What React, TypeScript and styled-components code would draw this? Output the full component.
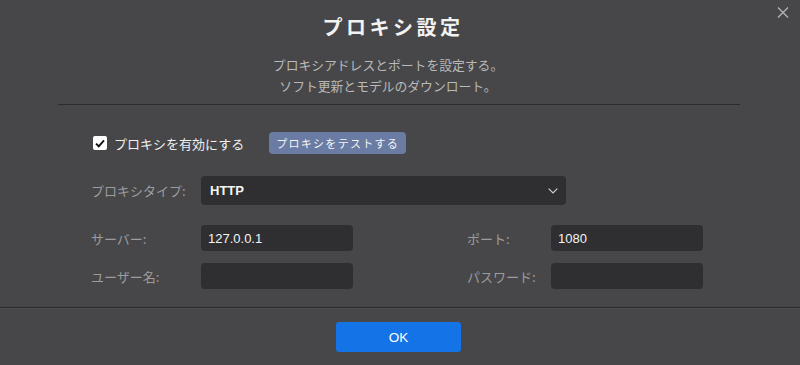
import React, { useState } from 'react'
import styled, { createGlobalStyle } from 'styled-components'

const GlobalStyle = createGlobalStyle`
  html, body {
    margin: 0;
    padding: 0;
    background: #474749;
  }
  * { box-sizing: border-box; }
`

const FONT = `"Noto Sans CJK JP", "Liberation Sans", Arial, sans-serif`

const Dialog = styled.div`
  position: relative;
  width: 800px;
  height: 365px;
  background: #474749;
  font-family: ${FONT};
  display: flex;
  flex-direction: column;
  overflow: hidden;
`

const CloseBtn = styled.button`
  position: absolute;
  top: 6px;
  right: 10px;
  width: 14px;
  height: 13px;
  padding: 0;
  border: none;
  background: transparent;
  cursor: pointer;
  display: flex;
  align-items: center;
  justify-content: center;
`

const Header = styled.div`
  padding-top: 14px;
  display: flex;
  flex-direction: column;
  align-items: center;
`

const Title = styled.h1`
  margin: 0 14px 0 0;
  font-size: 20px;
  line-height: 26px;
  font-weight: 700;
  letter-spacing: 3.5px;
  color: #f2f2f2;
`

const Subtitle = styled.p`
  margin: 14px 24px 0 0;
  font-size: 12.8px;
  line-height: 21px;
  color: #b9b9b9;
  text-align: center;
`

const Divider = styled.hr`
  align-self: stretch;
  margin: 8px 60px 0 58px;
  border: none;
  border-top: 1px solid #2c2c2e;
  height: 0;
`

const Body = styled.div`
  flex: 1;
  padding: 27px 0 0 91px;
  display: flex;
  flex-direction: column;
`

const CheckRow = styled.div`
  display: flex;
  align-items: center;
  height: 22px;
  gap: 25px;
`

const CheckLabel = styled.label`
  display: flex;
  align-items: center;
  gap: 7px;
  padding-left: 2px;
  font-size: 13px;
  color: #f0f0f0;
  cursor: pointer;
`

const CheckBox = styled.span`
  width: 14px;
  height: 14px;
  border-radius: 2px;
  background: #ffffff;
  display: flex;
  align-items: center;
  justify-content: center;
`

const TestButton = styled.button`
  height: 22px;
  padding: 0 7px;
  border: none;
  border-radius: 4px;
  background: #6a7ca3;
  color: #f4f4f4;
  font-family: ${FONT};
  font-size: 11px;
  letter-spacing: 1.3px;
  cursor: pointer;
`

const TypeRow = styled.div`
  margin-top: 22px;
  display: flex;
  align-items: center;
`

const Label = styled.span<{ $w: number }>`
  width: ${p => p.$w}px;
  flex-shrink: 0;
  font-size: 13px;
  color: #9c9c9c;
`

const Select = styled.div`
  width: 365px;
  height: 29px;
  border-radius: 4px;
  background: #2f2f31;
  display: flex;
  align-items: center;
  justify-content: space-between;
  padding: 0 8px 0 9px;
  font-family: "Liberation Sans", Arial, sans-serif;
  font-size: 13px;
  font-weight: 700;
  color: #f4f4f4;
`

const Grid = styled.div`
  margin-top: 20px;
  display: grid;
  grid-template-columns: 110px 152px 114px 84px 152px;
  row-gap: 12px;
  align-items: center;
`

const Input = styled.input`
  width: 152px;
  height: 26px;
  border: none;
  border-radius: 4px;
  background: #2f2f31;
  padding: 0 7px;
  font-family: "Liberation Sans", Arial, sans-serif;
  font-size: 13px;
  color: #f4f4f4;
  outline: none;
`

const Footer = styled.div`
  border-top: 1px solid #2a2a2c;
  box-shadow: inset 0 1px 0 #4f4f51;
  height: 58px;
  display: flex;
  justify-content: center;
  padding: 14px 3px 0 0;
`

const OkButton = styled.button`
  width: 125px;
  height: 30px;
  border: none;
  border-radius: 3px;
  background: #1473e6;
  color: #ffffff;
  font-family: "Liberation Sans", Arial, sans-serif;
  font-size: 13.5px;
  cursor: pointer;
`

const App: React.FC = () => {
  const [enabled, setEnabled] = useState(true)
  const [server, setServer] = useState('127.0.0.1')
  const [port, setPort] = useState('1080')
  const [user, setUser] = useState('')
  const [pass, setPass] = useState('')

  return (
    <>
      <GlobalStyle />
      <Dialog>
        <CloseBtn aria-label="close">
          <svg width="12" height="11" viewBox="0 0 12 11">
            <path d="M1 0.5 L11 10.5 M11 0.5 L1 10.5" stroke="#b4b4b4" strokeWidth="1.3" />
          </svg>
        </CloseBtn>
        <Header>
          <Title>プロキシ設定</Title>
          <Subtitle>
            プロキシアドレスとポートを設定する。
            <br />
            ソフト更新とモデルのダウンロート。
          </Subtitle>
          <Divider />
        </Header>
        <Body>
          <CheckRow>
            <CheckLabel onClick={() => setEnabled(!enabled)}>
              <CheckBox>
                {enabled && (
                  <svg width="10" height="9" viewBox="0 0 10 9">
                    <path d="M1 4.6 L3.8 7.3 L9 1.4" stroke="#111" strokeWidth="1.9" fill="none" />
                  </svg>
                )}
              </CheckBox>
              プロキシを有効にする
            </CheckLabel>
            <TestButton>プロキシをテストする</TestButton>
          </CheckRow>
          <TypeRow>
            <Label $w={110}>プロキシタイプ:</Label>
            <Select>
              HTTP
              <svg width="10" height="6" viewBox="0 0 10 6">
                <path d="M0.7 0.7 L5 5 L9.3 0.7" stroke="#cfcfcf" strokeWidth="1.2" fill="none" />
              </svg>
            </Select>
          </TypeRow>
          <Grid>
            <Label $w={110}>サーバー:</Label>
            <Input value={server} onChange={e => setServer(e.target.value)} />
            <span />
            <Label $w={84}>ポート:</Label>
            <Input value={port} onChange={e => setPort(e.target.value)} />
            <Label $w={110}>ユーザー名:</Label>
            <Input value={user} onChange={e => setUser(e.target.value)} />
            <span />
            <Label $w={84}>パスワード:</Label>
            <Input type="password" value={pass} onChange={e => setPass(e.target.value)} />
          </Grid>
        </Body>
        <Footer>
          <OkButton>OK</OkButton>
        </Footer>
      </Dialog>
    </>
  )
}

export default App
